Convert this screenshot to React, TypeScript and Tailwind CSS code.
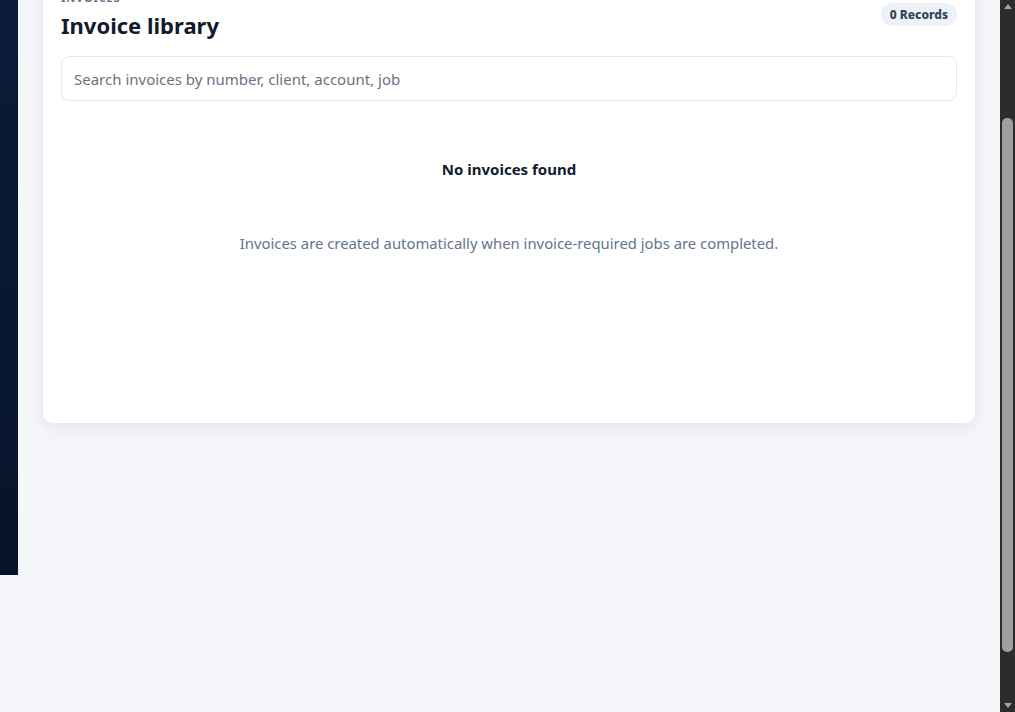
import React from "react";

export default function App() {
  return (
    <div
      className="flex h-[712px] w-[1015px] overflow-hidden bg-[#f4f6fa]"
      style={{ fontFamily: '"Noto Sans", "Open Sans", sans-serif' }}
    >
      <div className="flex w-[1000px] items-start">
        <aside className="h-[575px] w-[18px] shrink-0 bg-gradient-to-b from-[#0a1c3a] to-[#06132a]" />
        <main className="flex-1 px-[25px]">
          <section className="mt-[-30px] rounded-[10px] bg-white p-[18px] shadow-[0_4px_18px_rgba(15,23,42,0.08)]">
            <div className="flex items-center justify-between">
              <div>
                <div className="mt-[3px] text-[11px] font-bold uppercase leading-[14px] tracking-[0.08em] text-[#64748b]">
                  Invoices
                </div>
                <h1 className="mt-[5px] text-[22px] font-bold leading-[30px] text-[#111b2e]">
                  Invoice library
                </h1>
              </div>
              <span className="rounded-full bg-[#eef2f7] px-[9px] py-[4px] text-[12px] font-extrabold leading-[15px] text-[#334155]">
                0 Records
              </span>
            </div>
            <input
              className="mt-[16px] h-[45px] w-full rounded-[8px] border border-[#e2e8f0] px-[12px] text-[15px] text-[#1f2937] outline-none placeholder:text-[#6b7280]"
              placeholder="Search invoices by number, client, account, job"
            />
            <div className="flex h-[304px] flex-col items-center pt-[57px]">
              <div className="text-[15px] font-bold leading-[22px] text-[#111b2e]">
                No invoices found
              </div>
              <p className="mt-[52px] text-[14.85px] leading-[22px] text-[#64748b]">
                Invoices are created automatically when invoice-required jobs are completed.
              </p>
            </div>
          </section>
        </main>
      </div>
      <div className="relative flex h-[712px] w-[15px] flex-col items-center bg-[#2c2c2c]">
        <div className="mt-[4px] h-0 w-0 border-x-[4px] border-b-[5px] border-x-transparent border-b-[#a3a3a3]" />
        <div className="mt-[109px] h-[534px] w-[11px] rounded-[5px] bg-[#9f9f9f]" />
        <div className="mt-auto mb-[4px] h-0 w-0 border-x-[4px] border-t-[5px] border-x-transparent border-t-[#a3a3a3]" />
      </div>
    </div>
  );
}
